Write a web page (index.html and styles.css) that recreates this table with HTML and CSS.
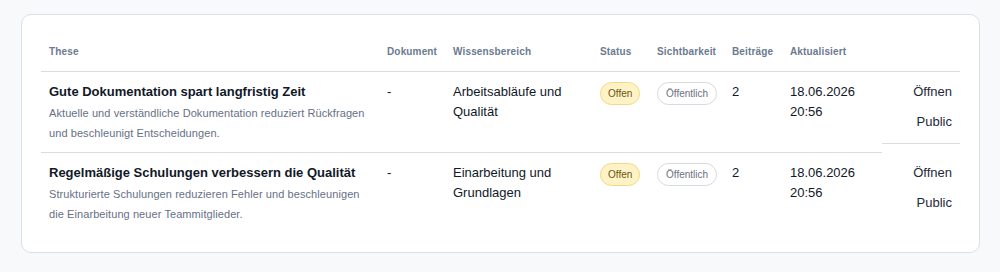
FILE: index.html
```html
<!DOCTYPE html>
<html lang="de">
<head>
<meta charset="utf-8">
<title>Thesen</title>
<link rel="stylesheet" href="styles.css">
</head>
<body>
<div class="card">
  <table class="tbl">
    <colgroup>
      <col class="c-these"><col class="c-dok"><col class="c-wiss"><col class="c-status"><col class="c-sicht"><col class="c-beit"><col class="c-akt"><col class="c-act">
    </colgroup>
    <thead>
      <tr>
        <th>These</th>
        <th>Dokument</th>
        <th>Wissensbereich</th>
        <th>Status</th>
        <th>Sichtbarkeit</th>
        <th>Beiträge</th>
        <th>Aktualisiert</th>
        <th></th>
      </tr>
    </thead>
    <tbody>
      <tr>
        <td>
          <div class="title">Gute Dokumentation spart langfristig Zeit</div>
          <div class="desc">Aktuelle und verständliche Dokumentation reduziert Rückfragen und beschleunigt Entscheidungen.</div>
        </td>
        <td>-</td>
        <td>Arbeitsabläufe und Qualität</td>
        <td><span class="badge badge-open">Offen</span></td>
        <td><span class="badge badge-public">Öffentlich</span></td>
        <td>2</td>
        <td>18.06.2026 20:56</td>
        <td class="act-cell"><div class="actions"><a class="act">Öffnen</a><a class="act">Public</a></div></td>
      </tr>
      <tr>
        <td>
          <div class="title">Regelmäßige Schulungen verbessern die Qualität</div>
          <div class="desc">Strukturierte Schulungen reduzieren Fehler und beschleunigen die Einarbeitung neuer Teammitglieder.</div>
        </td>
        <td>-</td>
        <td>Einarbeitung und Grundlagen</td>
        <td><span class="badge badge-open">Offen</span></td>
        <td><span class="badge badge-public">Öffentlich</span></td>
        <td>2</td>
        <td>18.06.2026 20:56</td>
        <td class="act-cell"><div class="actions"><a class="act">Öffnen</a><a class="act">Public</a></div></td>
      </tr>
    </tbody>
  </table>
</div>
</body>
</html>
```

FILE: styles.css
```css
html, body {
  margin: 0;
  background: #f8f9fb;
}
body {
  padding: 14px 20px 0 21px;
  font-family: "Liberation Sans", Arial, sans-serif;
  color: #111827;
}
.card {
  background: #ffffff;
  border: 1px solid #dcdfe5;
  border-radius: 10px;
  padding: 20px 19px 19px 19px;
}
.tbl {
  width: 100%;
  border-collapse: collapse;
  table-layout: fixed;
}
.c-these { width: 338px; }
.c-dok { width: 66px; }
.c-wiss { width: 147px; }
.c-status { width: 57px; }
.c-sicht { width: 75px; }
.c-beit { width: 58px; }
.c-akt { width: 100px; }
.c-act { width: 78px; }
th {
  text-align: left;
  font-size: 10px;
  font-weight: bold;
  color: #6b7a90;
  letter-spacing: 0.15px;
  line-height: 14px;
  padding: 10px 8px 12px 8px;
  border-bottom: 1px solid #d9dce2;
  white-space: nowrap;
}
td {
  vertical-align: top;
  font-size: 13px;
  line-height: 20px;
  padding: 10px 8px 9px 8px;
  color: #111827;
}
tbody tr:not(:last-child) td {
  border-bottom: 1px solid #d9dce2;
}
tbody tr td.act-cell {
  border-bottom: none;
  padding: 0;
}
.title {
  font-weight: bold;
  font-size: 13px;
  line-height: 20px;
  color: #111827;
}
.desc {
  margin-top: 1px;
  font-size: 11px;
  letter-spacing: 0.08px;
  line-height: 20px;
  color: #667085;
}
.badge {
  display: inline-block;
  font-size: 10px;
  line-height: 15px;
  padding: 3px 7px;
  border-radius: 999px;
  border: 1px solid transparent;
}
.badge-open {
  background: #fef3c7;
  border-color: #f6d87f;
  color: #6b5410;
}
.badge-public {
  background: #ffffff;
  border-color: #d6d9df;
  color: #6b7280;
  padding: 3px 8px;
}
.actions {
  display: flex;
  flex-direction: column;
  align-items: flex-end;
  gap: 10px;
  padding: 10px 8px 11px 8px;
}
tbody tr:not(:last-child) .actions {
  border-bottom: 1px solid #d9dce2;
}
.act {
  font-size: 13px;
  line-height: 20px;
  color: #1f2937;
  cursor: pointer;
}
```
